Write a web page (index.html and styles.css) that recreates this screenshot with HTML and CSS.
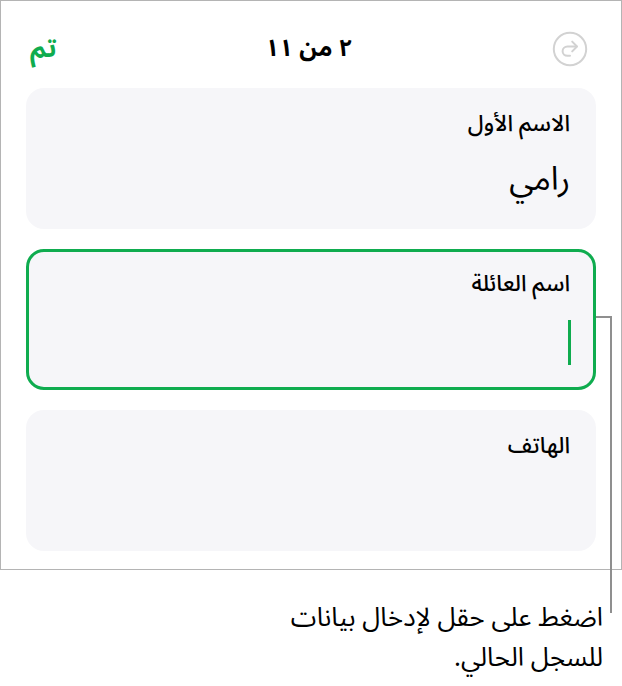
FILE: index.html
```html
<!DOCTYPE html>
<html lang="ar" dir="rtl">
<head>
<meta charset="utf-8">
<title>السجل</title>
<link rel="stylesheet" href="styles.css">
</head>
<body>
<div class="page">
  <section class="screen">
    <header class="topbar">
      <span class="done">تم</span>
      <span class="count">٢ من ١١</span>
      <svg class="redo" width="36" height="36" viewBox="0 0 36 36" fill="none" aria-hidden="true">
        <circle cx="18" cy="18" r="16.2" stroke="#d2d2d2" stroke-width="2"/>
        <path d="M24.5 15.5H15.5C12.6 15.5 10.6 17.6 10.6 20.2C10.6 22.8 12.6 24.8 15.5 24.8H18" stroke="#d2d2d2" stroke-width="2" stroke-linecap="round"/>
        <path d="M20.2 10.6L25 15.5L20.2 20.4" stroke="#d2d2d2" stroke-width="2" stroke-linecap="round" stroke-linejoin="round"/>
      </svg>
    </header>
    <div class="fields">
      <div class="field">
        <div class="label">الاسم الأول</div>
        <div class="value">رامي</div>
      </div>
      <div class="field active">
        <div class="label">اسم العائلة</div>
        <div class="caret"></div>
      </div>
      <div class="field">
        <div class="label">الهاتف</div>
      </div>
    </div>
  </section>
  <p class="caption">اضغط على حقل لإدخال بيانات<br>للسجل الحالي.</p>
  <div class="leader"></div>
</div>
</body>
</html>
```
FILE: styles.css
```css
* { box-sizing: border-box; }
html, body { margin: 0; padding: 0; background: #fff; }
body { font-family: "Noto Sans Arabic", "DejaVu Sans", sans-serif; color: #000; }
.page { position: relative; width: 622px; height: 686px; overflow: hidden; }
.screen {
  height: 570px;
  border: 1px solid #b4b4b4;
  padding: 0 25px;
}
.topbar {
  height: 87px;
  display: grid;
  grid-template-columns: 1fr auto 1fr;
  align-items: center;
  direction: ltr;
  padding: 8px 8px 0 4px;
}
.done { color: #0fac4f; font-size: 26px; font-weight: 700; line-height: 1; justify-self: start; }
.count { font-size: 24px; font-weight: 700; line-height: 1; direction: rtl; }
.redo { display: block; justify-self: end; }
.fields { display: flex; flex-direction: column; gap: 20px; }
.field {
  height: 141px;
  background: #f6f6f9;
  border-radius: 18px;
  padding: 22px 26px 0;
}
.field.active {
  border: 3px solid #0fac4f;
  padding: 18px 23px 0;
}
.label { font-size: 22.5px; font-weight: 500; line-height: 28px; }
.value { font-size: 33px; line-height: 44px; margin-top: 20px; }
.caret { width: 3px; height: 45px; background: #0fac4f; margin-top: 22px; margin-right: -1px; }
.caption {
  margin: 28px 0 0;
  padding: 0 19px 0 0;
  font-size: 26px;
  line-height: 40px;
  color: #000;
}
.leader {
  position: absolute;
  left: 596px;
  top: 316px;
  width: 16px;
  height: 297px;
  border-top: 2px solid #8f8f8f;
  border-right: 2px solid #8f8f8f;
}
```
